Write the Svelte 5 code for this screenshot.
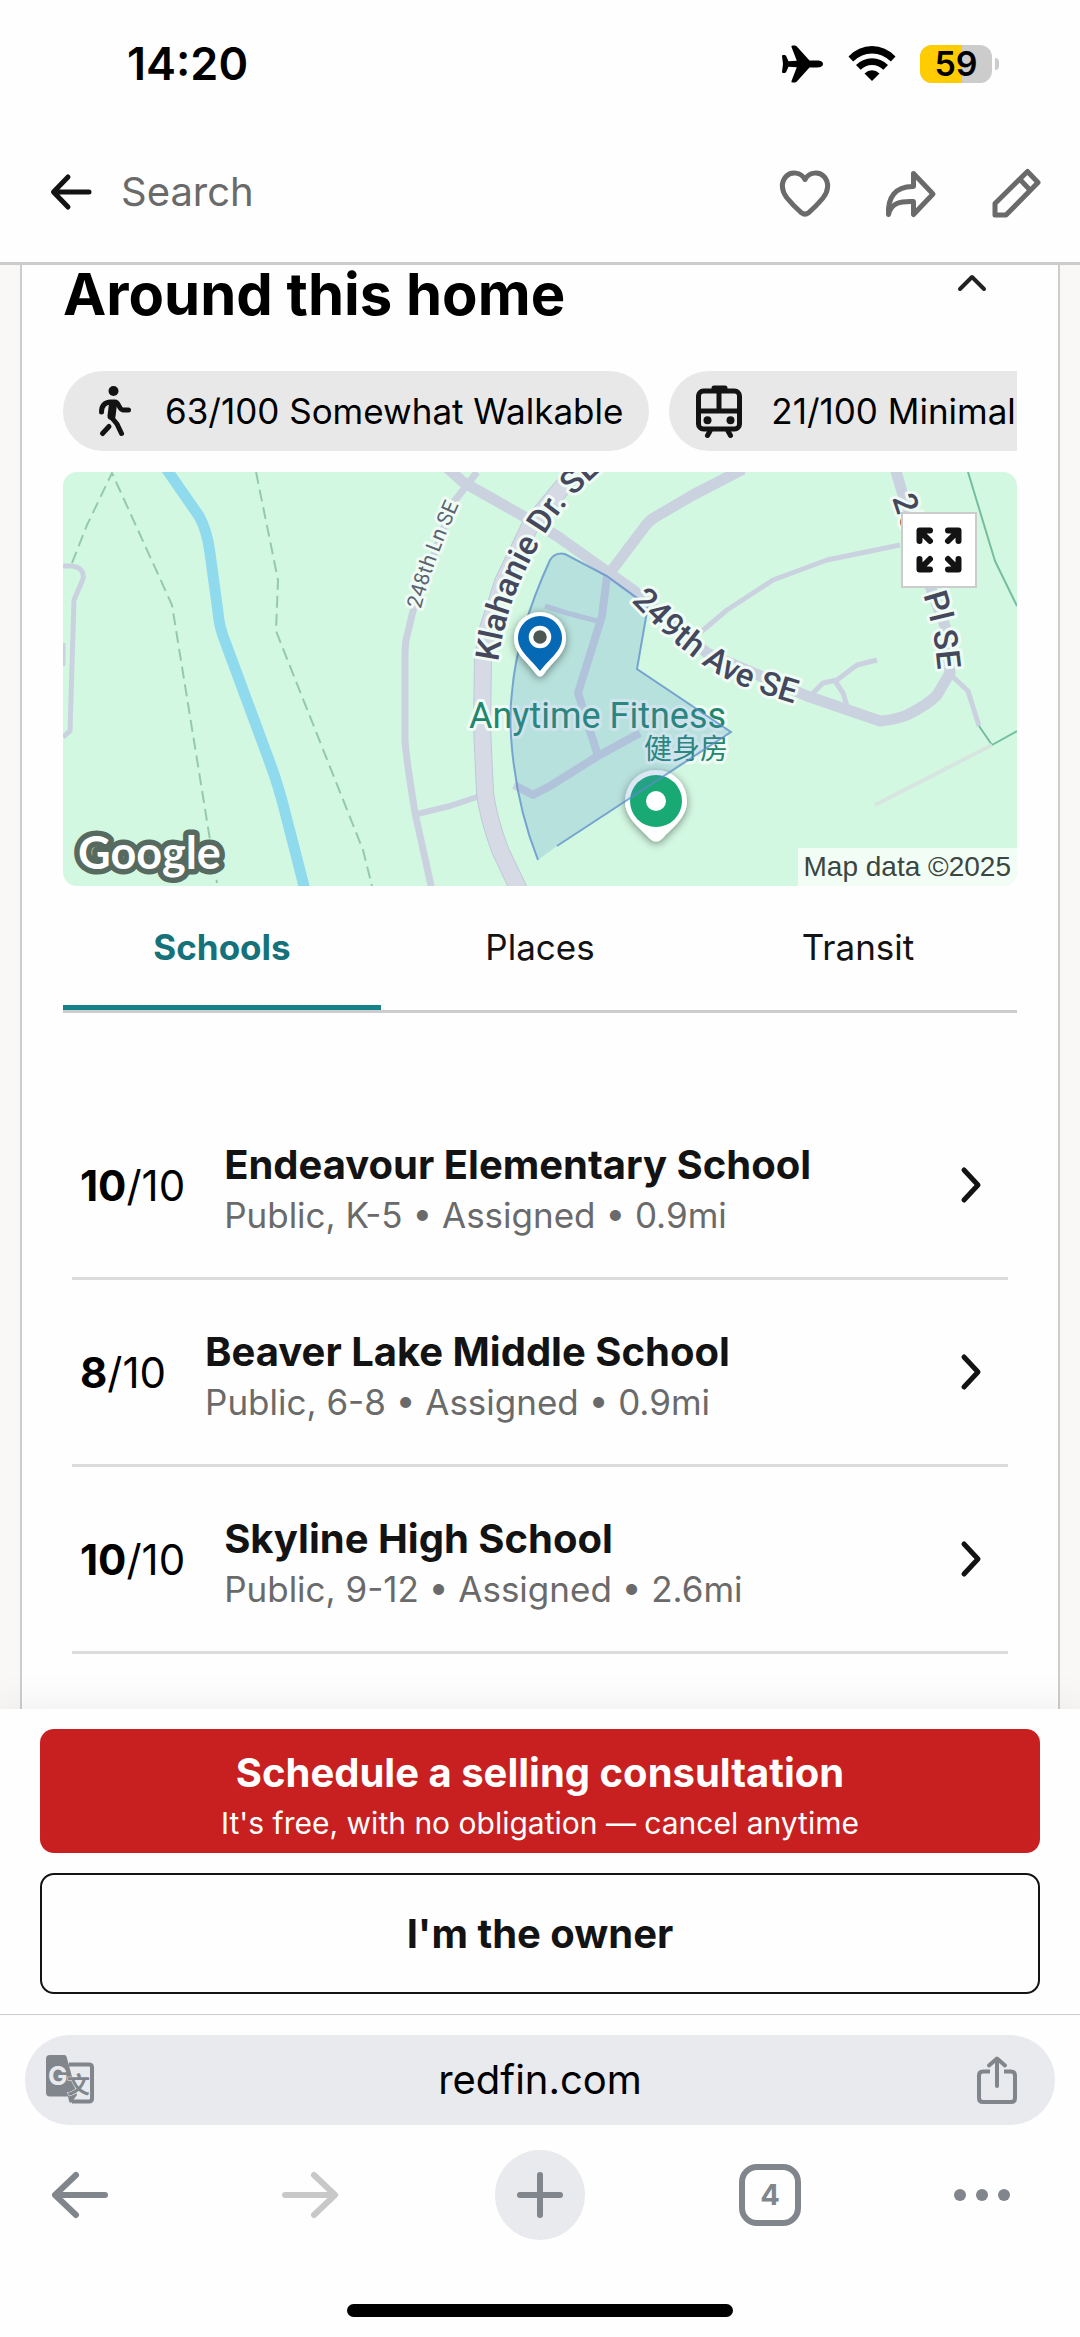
<script lang="ts">
  interface School {
    name: string;
    rating: number;
    grades: string;
    distance: string;
  }

  const tabs = ["Schools", "Places", "Transit"];

  const schools: School[] = [
    { name: "Endeavour Elementary School", rating: 10, grades: "K-5", distance: "0.9mi" },
    { name: "Beaver Lake Middle School", rating: 8, grades: "6-8", distance: "0.9mi" },
    { name: "Skyline High School", rating: 10, grades: "9-12", distance: "2.6mi" },
  ];

  const battery = 59;
  const openTabs = 4;

  let activeTab = $state("Schools");
</script>

<div class="page">
  <div class="status-bar">
    <span class="clock">14:20</span>
    <div class="status-icons">
      <svg width="42" height="38" viewBox="0 0 42 38" aria-hidden="true">
        <path
          d="M41 19C41 16.800 38.500 15.600 35.500 15.600H27.500L14.800 1.500Q14 .5 12.800 .5H10.500Q9 .5 9.500 2L14.800 15.700 6.500 16.200 4 10.800Q3.500 10 2.500 10H1Q0 10 0 11L1 19 0 27Q0 28 1 28H2.500Q3.500 28 4 27.200L6.500 21.800 14.800 22.300 9.500 36Q9 37.500 10.500 37.500H12.800Q14 37.500 14.800 36.500L27.500 22.400H35.500C38.500 22.400 41 21.200 41 19Z"
        />
      </svg>
      <svg width="48" height="36" viewBox="0 0 48 36" aria-hidden="true">
        <path d="M.5 10.500Q10.500 0 24 0T47.500 10.500L42.800 15.500Q34.500 7.500 24 7.500T5.200 15.500Z" />
        <path d="M8 19Q15 12.200 24 12.200T40 19L35.300 23.700Q30.500 19 24 19T12.700 23.700Z" />
        <path d="M16.500 27.500Q20 24.300 24 24.300T31.500 27.500L24 35Z" />
      </svg>
      <div class="battery">
        <div class="battery-body">
          <div class="battery-level" style="width: {battery}%"></div>
          <span class="battery-text">{battery}</span>
        </div>
        <div class="battery-cap"></div>
      </div>
    </div>
  </div>

  <header class="top-nav">
    <a class="back" href="#search">
      <svg width="42" height="36" viewBox="0 0 42 36" fill="none" stroke="#131313" stroke-width="5" stroke-linecap="round" stroke-linejoin="round" aria-hidden="true">
        <path d="M18 3 3.500 18 18 33M4 18H39" />
      </svg>
      <span>Search</span>
    </a>
    <div class="nav-actions">
      <button class="icon-button" aria-label="Favorite">
        <svg width="52" height="50" viewBox="0 0 52 50" fill="none" stroke="#6a6a6a" stroke-width="5" stroke-linejoin="round" aria-hidden="true">
          <path d="M26 10.500C22 3 12 2 7 7.500 1.500 13.500 2.500 22 8 29 12.500 34.500 17 39 22.500 43.800Q26 46.500 29.500 43.800C35 39 39.500 34.500 44 29 49.500 22 50.500 13.500 45 7.500 40 2 30 3 26 10.500Z" />
        </svg>
      </button>
      <button class="icon-button" aria-label="Share">
        <svg width="52" height="50" viewBox="0 0 52 50" fill="none" stroke="#6a6a6a" stroke-width="5" stroke-linejoin="round" stroke-linecap="round" aria-hidden="true">
          <path d="M28.500 4.500 48 25 28.500 45.500V32.500C15 32 6 34 3.500 45.500 2.500 29 10 17 28.500 17.500Z" />
        </svg>
      </button>
      <button class="icon-button" aria-label="Edit">
        <svg width="52" height="50" viewBox="0 0 52 50" fill="none" stroke="#6a6a6a" stroke-width="5" stroke-linejoin="round" aria-hidden="true">
          <path d="M4 34.500 36.500 2.500 47 13.500 15 46H4ZM29 10.500 39 21" />
        </svg>
      </button>
    </div>
  </header>

  <main class="content">
    <section class="card">
      <div class="card-head">
        <h2>Around this home</h2>
        <button class="collapse" aria-label="Collapse section">
          <svg width="30" height="18" viewBox="0 0 30 18" fill="none" stroke="#222" stroke-width="4" stroke-linecap="round" stroke-linejoin="round" aria-hidden="true">
            <path d="M3 15 15 3 27 15" />
          </svg>
        </button>
      </div>

      <div class="scores">
        <button class="score">
          <svg width="48" height="48" viewBox="0 0 48 48" fill="none" stroke="#131313" stroke-width="5" stroke-linecap="round" stroke-linejoin="round" aria-hidden="true">
            <circle cx="24.500" cy="4" r="5" fill="#131313" stroke="none" />
            <path d="M12.500 25Q12.500 15.500 22 15H26C30 15 30 23 34 23H39.500" />
            <path d="M24 17 22.500 29" stroke-width="8" />
            <path d="M23 31 28 37 32.500 46.500M20 39.500 13.500 46.500" />
          </svg>
          <span>63/100 Somewhat Walkable</span>
        </button>
        <button class="score">
          <svg width="48" height="48" viewBox="0 0 48 48" fill="none" stroke="#131313" stroke-width="5" stroke-linecap="round" aria-hidden="true">
            <rect x="3.500" y="4" width="41" height="38" rx="5" />
            <path d="M19 1H30M4 24H44M24 5V24" />
            <path d="M15 44 12.500 48.500M33 44 35.500 48.500" />
            <circle cx="12.500" cy="33.300" r="4" fill="#131313" stroke="none" />
            <circle cx="35.500" cy="33.300" r="4" fill="#131313" stroke="none" />
          </svg>
          <span>21/100 Minimal Transit</span>
        </button>
      </div>

      <div class="map">
        <svg class="map-canvas" viewBox="0 0 954 414" preserveAspectRatio="xMidYMid slice" role="img" aria-label="Neighborhood map">
          <defs>
            <path id="road-248" d="M358 137Q368 94 398 28" />
            <path id="road-klahanie" d="M435 190C441 150 450 118 477 71S518 18 560 -22" />
            <path id="road-249" d="M568 129Q632 196 679 214T770 241" />
            <path id="road-250" d="M829 26 860 120" />
            <path id="road-250-south" d="M860 123Q873 160 876 215" />
            <filter id="pin-shadow" x="-50%" y="-50%" width="200%" height="200%">
              <feDropShadow dx="0" dy="2" stdDeviation="4" flood-color="#000" flood-opacity="0.45" />
            </filter>
          </defs>
          <rect width="954" height="414" fill="#d3f8e2" />

          <g class="trail">
            <path d="M9 91 24 53 49 1 109 133 154 411" />
            <path d="M193 0 215 108 213 159 300 378 309 414" />
          </g>
          <path class="river" d="M102 -5 136 44Q144 58 147 81L155 140Q156 155 163 172L207 291Q215 312 222 340L242 418" />

          <g class="road">
            <path d="M0 94H9Q22 96 20 107L11 128 7 259 0 265" stroke-width="5" />
            <path d="M1 171V194" stroke-width="3" />
            <path d="M414 0 390 31 350 139 343 168Q342 175 342 190V268Q343 285 352 341L369 418" stroke-width="7" />
            <path d="M354 342 387 334 417 324" stroke-width="6" />
            <path d="M380 -8 400 10 467 48 494 64 570 118 644 181 744 224 817 249Q832 248 844 243 866 232 874 223L887 201 882 154 867 114 832 -4" stroke-width="11" />
            <path d="M549 98 580 57Q586 48 594 44L630 23 680 -3" stroke-width="11" />
            <path d="M837 73 764 88 710 108 664 138 638 160" stroke-width="5" />
            <path d="M750 221 760 211 774 208 794 193 814 188M772 209 780 221 784 234" stroke-width="5" />
            <path d="M889 204 905 219 916 254" stroke-width="5" />
            <path d="M544 104 539 144 515 221 535 284" stroke-width="8" />
            <path d="M482 134 504 141 534 149" stroke-width="5" />
            <path d="M577 261 535 284 487 314 470 323 451 313" stroke-width="8" />
          </g>
          <g fill="none" stroke-linejoin="round">
            <path d="M516 -5 467 54 440 110 424 160 420 188 419 254 422 321Q425 345 437 378L457 420" stroke="#c0c8d8" stroke-width="18" />
            <path d="M516 -5 467 54 440 110 424 160 420 188 419 254 422 321Q425 345 437 378L457 420" stroke="#d6dae5" stroke-width="16" />
            <path d="M905 0 932 89 954 134M916 254 929 273 954 259" stroke="#76bd9f" stroke-width="2" />
            <path d="M929 273 812 333" stroke="#d6e6de" stroke-width="4" />
          </g>

          <g class="label poi">
            <text x="406" y="256" font-size="36">Anytime Fitness</text>
            <text x="581" y="287" font-size="28">健身房</text>
          </g>
          <path d="M562 329A31 31 0 1 1 624 329C624 347 606 358 600 366Q593 373 586 366C580 358 562 347 562 329Z" fill="#fff" filter="url(#pin-shadow)" />
          <circle cx="593" cy="329" r="26" fill="#19a974" />
          <circle cx="593" cy="329" r="10" fill="#fff" />

          <path d="M475 388C448 320 445 250 449 220Q454 160 487 88Q492 80 502 82L544 104 585 134 574 197 668 260 494 374 475 388Z" fill="#4b86c8" fill-opacity="0.2" />
          <path d="M475 388C448 320 445 250 449 220Q454 160 487 88Q492 80 502 82L544 104 585 134 574 197 668 260 494 374" fill="none" stroke="#5b8cc9" stroke-opacity="0.75" stroke-width="2" />

          <text class="label" font-size="21" fill="#5b6470"><textPath href="#road-248">248th Ln SE</textPath></text>
          <g class="label street">
            <text><textPath href="#road-klahanie">Klahanie Dr. SE</textPath></text>
            <text><textPath href="#road-249">249th Ave SE</textPath></text>
            <text><textPath href="#road-250">250th</textPath></text>
            <text><textPath href="#road-250-south">Pl SE</textPath></text>
          </g>

          <path d="M451 166A26 26 0 1 1 503 166C503 182 489 190 481 202Q477 207 473 202C465 190 451 182 451 166Z" fill="#fff" filter="url(#pin-shadow)" />
          <path d="M455 166A22 22 0 1 1 499 166C499 179 487 186 477 199 467 186 455 179 455 166Z" fill="#0569b5" />
          <circle cx="477" cy="165" r="9" fill="#4b5753" stroke="#fff" stroke-width="4.500" />

          <text class="google" x="15" y="397" font-size="45">Google</text>
        </svg>
        <span class="map-credit">Map data ©2025</span>
        <button class="expand" aria-label="Expand map">
          <svg width="46" height="46" viewBox="0 0 46 46" fill="none" stroke="#131313" stroke-width="6" stroke-linecap="round" stroke-linejoin="round" aria-hidden="true">
            <path d="M3.500 14V3.500H14M4 4 14 14M32 3.500H42.500V14M42 4 32 14M3.500 32V42.500H14M4 42 14 32M42.500 32V42.500H32M42 42 32 32" />
          </svg>
        </button>
      </div>

      <div class="tabs" role="tablist">
        {#each tabs as tab}
          <button
            class="tab"
            class:active={activeTab === tab}
            role="tab"
            aria-selected={activeTab === tab}
            onclick={() => (activeTab = tab)}
          >
            {tab}
          </button>
        {/each}
      </div>

      <ul class="schools">
        {#each schools as school}
          <li>
            <a class="school" href="#school">
              <span class="rating"><b>{school.rating}</b>/10</span>
              <span class="school-info">
                <span class="school-name">{school.name}</span>
                <span class="school-meta">Public, {school.grades} • Assigned • {school.distance}</span>
              </span>
              <svg width="22" height="36" viewBox="0 0 22 36" fill="none" stroke="#131313" stroke-width="5" stroke-linecap="round" stroke-linejoin="round" aria-hidden="true">
                <path d="M4 3 18 18 4 33" />
              </svg>
            </a>
          </li>
        {/each}
      </ul>
    </section>
  </main>

  <div class="cta">
    <button class="primary">
      <strong>Schedule a selling consultation</strong>
      <small>It's free, with no obligation — cancel anytime</small>
    </button>
    <button class="secondary">I'm the owner</button>
  </div>

  <footer class="browser">
    <div class="address">
      <button class="icon-button" aria-label="Translate">
        <svg width="48" height="50" viewBox="0 0 48 50" aria-hidden="true">
          <path d="M23 9.500H43Q46 9.500 46 12.500V43.500Q46 46.500 43 46.500H26" fill="none" stroke="#80868b" stroke-width="4" />
          <path d="M4 0H18.500Q20 0 20.500 1.500L31 40 25 48Q23.500 48 23 46L22 41.500H4Q0 41.500 0 37.500V4Q0 0 4 0Z" fill="#80868b" />
          <text x="2" y="30" font-family="Inter, sans-serif" font-weight="700" font-size="26" fill="#e8eaed">G</text>
          <text x="21" y="38" font-family="'Noto Sans CJK SC', sans-serif" font-weight="700" font-size="23" fill="#80868b" stroke="#e8eaed" stroke-width="1" paint-order="stroke">文</text>
        </svg>
      </button>
      <span class="url">redfin.com</span>
      <button class="icon-button" aria-label="Share page">
        <svg width="40" height="48" viewBox="0 0 40 48" fill="none" stroke="#80868b" stroke-width="4" stroke-linecap="round" stroke-linejoin="round" aria-hidden="true">
          <path d="M20 30V3M12 9.500 20 2.500 28 9.500" />
          <path d="M13 15.500H6Q2 15.500 2 19.500V42Q2 46 6 46H34Q38 46 38 42V19.500Q38 15.500 34 15.500H27" stroke-linecap="butt" />
        </svg>
      </button>
    </div>

    <nav class="toolbar">
      <button class="tool" aria-label="Back">
        <svg width="58" height="48" viewBox="0 0 58 48" fill="none" stroke="#80868b" stroke-width="6" stroke-linecap="round" stroke-linejoin="round" aria-hidden="true">
          <path d="M25 4 4 24 25 44M5 24H54" />
        </svg>
      </button>
      <button class="tool" aria-label="Forward" disabled>
        <svg width="58" height="48" viewBox="0 0 58 48" fill="none" stroke="#c8c8c8" stroke-width="6" stroke-linecap="round" stroke-linejoin="round" aria-hidden="true">
          <path d="M33 4 54 24 33 44M53 24H4" />
        </svg>
      </button>
      <button class="tool new-tab" aria-label="New tab">
        <svg width="48" height="48" viewBox="0 0 48 48" fill="none" stroke="#80868b" stroke-width="6" stroke-linecap="round" aria-hidden="true">
          <path d="M24 4V44M4 24H44" />
        </svg>
      </button>
      <button class="tool" aria-label="{openTabs} open tabs">
        <span class="tab-count">{openTabs}</span>
      </button>
      <button class="tool more" aria-label="More">
        <svg width="54" height="14" viewBox="0 0 54 14" fill="#80868b" aria-hidden="true">
          <circle cx="5" cy="7" r="6" />
          <circle cx="27" cy="7" r="6" />
          <circle cx="49" cy="7" r="6" />
        </svg>
      </button>
    </nav>
    <div class="home-indicator"></div>
  </footer>
</div>

<style>
  :global(body) {
    margin: 0;
    background: #fefefe;
  }

  .page {
    display: flex;
    flex-direction: column;
    min-height: 100vh;
    font-family: Inter, "Liberation Sans", sans-serif;
    color: #131313;
  }

  button {
    margin: 0;
    padding: 0;
    border: 0;
    background: none;
    font: inherit;
    color: inherit;
    cursor: pointer;
  }

  a {
    color: inherit;
    text-decoration: none;
  }

  svg {
    display: block;
    flex-shrink: 0;
    overflow: visible;
  }

  .status-bar {
    display: flex;
    align-items: center;
    justify-content: space-between;
    padding: 34px 81px 31px 127px;
    color: #000;
  }

  .clock {
    font-size: 45px;
    font-weight: 600;
    line-height: 60px;
  }

  .status-icons {
    display: flex;
    align-items: center;
    gap: 24px;
  }

  .battery {
    display: flex;
    align-items: center;
    gap: 3px;
  }

  .battery-body {
    position: relative;
    width: 72px;
    height: 38px;
    border-radius: 12px;
    background: #ccc;
    overflow: hidden;
  }

  .battery-level {
    height: 100%;
    background: #ffcc02;
  }

  .battery-text {
    position: absolute;
    inset: 0;
    text-align: center;
    font-size: 34px;
    font-weight: 600;
    line-height: 38px;
  }

  .battery-cap {
    width: 4px;
    height: 12px;
    border-radius: 0 6px 6px 0;
    background: #ccc;
  }

  .top-nav {
    display: flex;
    align-items: center;
    justify-content: space-between;
    height: 137px;
    padding: 0 37px 0 50px;
    border-bottom: 3px solid #ccc;
  }

  .back {
    display: flex;
    align-items: center;
    gap: 29px;
    padding-bottom: 4px;
    font-size: 40px;
    color: #6a6a6a;
  }

  .nav-actions {
    display: flex;
    gap: 54px;
  }

  .content {
    display: flex;
    flex: 1;
    padding: 0 20px;
    background: #f9f8f7;
  }

  .card {
    flex: 1;
    min-width: 0;
    padding: 0 41px;
    border: solid #ccc;
    border-width: 0 2px;
    background: #fefefe;
  }

  .card-head {
    display: flex;
    align-items: flex-start;
    justify-content: space-between;
    padding: 0 30px 48px 0;
  }

  h2 {
    margin: 0;
    font-size: 58px;
    font-weight: 700;
    line-height: 58px;
    color: #000;
  }

  .collapse {
    padding-top: 9px;
  }

  .scores {
    display: flex;
    gap: 20px;
    overflow: hidden;
  }

  .score {
    display: flex;
    flex-shrink: 0;
    align-items: center;
    gap: 28px;
    padding: 0 26px;
    border-radius: 40px;
    background: #e8e8e8;
    font-size: 35px;
    line-height: 80px;
    color: #000;
    white-space: nowrap;
  }

  .map {
    position: relative;
    margin-top: 21px;
    border-radius: 14px;
    overflow: hidden;
  }

  .map-canvas {
    width: 100%;
    overflow: hidden;
    font-family: Roboto, "Noto Sans CJK SC", sans-serif;
  }

  .trail {
    fill: none;
    stroke: #94c9ae;
    stroke-width: 2;
    stroke-dasharray: 12 6;
  }

  .river {
    fill: none;
    stroke: #90daee;
    stroke-width: 11;
  }

  .road {
    fill: none;
    stroke: #cbd2df;
    stroke-linejoin: round;
  }

  .label {
    paint-order: stroke;
    stroke: #effbf5;
    stroke-width: 6;
    stroke-linejoin: round;
  }

  .poi {
    fill: #22866d;
  }

  .street {
    fill: #45485c;
    font-size: 33px;
    font-weight: 500;
  }

  .google {
    paint-order: stroke;
    fill: #fff;
    stroke: #566a60;
    stroke-width: 11;
    stroke-linejoin: round;
    font-family: Lato, sans-serif;
    font-weight: 700;
  }

  .map-credit {
    position: absolute;
    right: 0;
    bottom: 0;
    padding: 0 6px;
    background: rgba(255, 255, 255, 0.7);
    font-family: "Liberation Sans", Arial, sans-serif;
    font-size: 28px;
    line-height: 38px;
    color: #3c4641;
  }

  .expand {
    position: absolute;
    top: 40px;
    right: 40px;
    display: grid;
    place-items: center;
    width: 76px;
    height: 76px;
    border: 2px solid #ccc;
    background: #fff;
  }

  .tabs {
    display: flex;
    border-bottom: 3px solid #ccc;
  }

  .tab {
    flex: 1;
    padding: 39px 0 36px;
    border-bottom: 5px solid transparent;
    font-size: 35px;
    line-height: 44px;
  }

  .tab.active {
    border-color: #15828a;
    font-weight: 700;
    color: #15727a;
  }

  .schools {
    margin: 0;
    padding: 80px 9px 54px;
    list-style: none;
  }

  .school {
    display: flex;
    align-items: center;
    padding: 0 26px 0 8px;
    border-bottom: 3px solid #dcdcdc;
  }

  .rating {
    font-size: 42px;
    color: #000;
  }

  .school-info {
    display: flex;
    flex: 1;
    flex-direction: column;
    padding: 47px 39px 37px;
    line-height: 50px;
  }

  .school-name {
    font-size: 40px;
    font-weight: 700;
  }

  .school-meta {
    font-size: 35px;
    color: #6a6a6a;
  }

  .cta {
    display: flex;
    flex-direction: column;
    gap: 20px;
    padding: 20px 40px;
    border-bottom: 1px solid #ccc;
    background: #fefefe;
    box-shadow: 0 0 40px rgba(0, 0, 0, 0.08);
  }

  .primary,
  .secondary {
    border-radius: 14px;
  }

  .primary {
    display: flex;
    flex-direction: column;
    align-items: center;
    padding: 19px 24px 5px;
    background: #c82021;
    color: #fff;
    line-height: 50px;
  }

  .primary strong {
    font-size: 40px;
    font-weight: 700;
  }

  .primary small {
    font-size: 30px;
  }

  .secondary {
    padding: 33px 24px;
    border: 2px solid #131313;
    font-size: 40px;
    font-weight: 700;
    line-height: 51px;
  }

  .browser {
    position: relative;
    padding: 20px 25px;
    background: #fefefe;
  }

  .address {
    display: grid;
    grid-template-columns: 1fr auto 1fr;
    align-items: center;
    padding: 0 38px 0 21px;
    border-radius: 45px;
    background: #e8eaed;
  }

  .address .icon-button {
    justify-self: start;
  }

  .address .icon-button:last-child {
    justify-self: end;
  }

  .url {
    padding-left: 17px;
    font-size: 40px;
    line-height: 90px;
    color: #000;
  }

  .toolbar {
    display: flex;
    justify-content: space-between;
    padding: 25px 10px 64px;
  }

  .tool {
    display: flex;
    align-items: center;
    justify-content: center;
    width: 90px;
    height: 90px;
    border-radius: 50%;
  }

  .new-tab {
    background: #e8eaed;
  }

  .more {
    justify-content: flex-start;
  }

  .tab-count {
    width: 50px;
    border: 6px solid #80868b;
    border-radius: 18px;
    font-size: 29px;
    font-weight: 700;
    line-height: 50px;
    text-align: center;
    color: #80868b;
  }

  .home-indicator {
    width: 386px;
    height: 13px;
    margin: 0 auto;
    border-radius: 7px;
    background: #000;
  }
</style>
